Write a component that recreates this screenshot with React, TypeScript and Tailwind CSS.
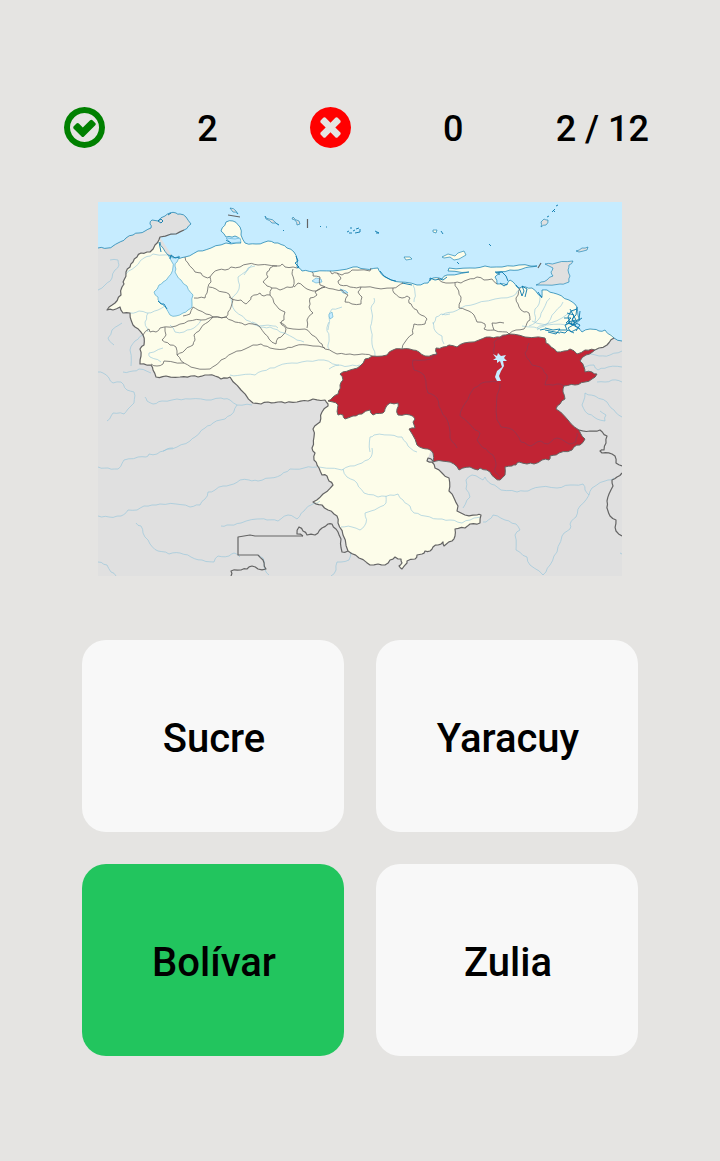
import React, { useState } from "react";

const LAND =
  "M98,248 108,248 113,246 118,243 126,238 133,235 139,233 145,231 151,228 150,224 152,220 158,221 165,216 170,213 176,213 180,214 186,217 191,224 184,230 176,233 160,237 200,300 560,345 614,338 622,341 622,576 98,576Z";

const VENEZUELA =
  "M160,237 155,245 150,252 141,253 137,257 133,262 130,267 126,272 124,280 124,284 122,287 121,295 115,303 107,310 113,310 120,307 123,313 130,313 133,325 135,327 143,335 144,345 140,349 141,356 140,364 151,365 153,370 156,377 166,376 180,377 191,376 198,377 205,375 215,376 221,379 230,377 241,390 253,403 261,404 268,402 278,402 285,403 297,402 308,401 313,399 325,400 328,404 328,406 322,412 320,422 313,429 314,437 312,448 315,453 314,460 319,468 322,475 327,476 329,481 333,485 323,494 313,502 322,505 328,510 337,516 338,523 343,535 348,551 359,558 370,565 378,564 385,565 390,560 395,557 401,559 402,563 399,566 402,569 407,563 407,561 415,559 417,555 422,554 425,551 430,551 433,547 438,545 443,542 444,546 452,541 455,536 455,529 465,528 470,524 480,523 481,515 477,515 465,515 457,511 458,506 454,498 449,491 449,478 442,473 435,468 432,462 427,461 428,458 450,400 560,370 595,350 607,345 614,338 612,335 605,330 599,331 590,329 582,332 575,326 580,320 577,307 569,300 557,294 547,290 542,290 542,297 532,288 522,287 517,287 510,280 507,285 497,284 495,277 500,274 495,272 510,270 522,269 529,267 537,266 519,265 502,267 485,266 470,268 449,268 448,271 469,272 447,275 442,279 433,278 428,283 417,285 400,282 387,278 380,272 378,268 365,269 353,267 333,271 313,272 302,271 297,267 297,260 294,252 287,248 278,243 268,241 256,244 245,243 241,235 240,227 233,221 226,222 221,231 226,237 235,236 240,239 241,243 226,243 211,248 198,251 185,257 176,258 168,255 163,248 160,242Z";

const BOLIVAR =
  "M328,401 333,397 338,394 340,385 343,380 340,374 350,370 360,366 365,359 372,356 387,355 393,350 402,349 413,350 419,352 425,356 437,354 436,348 443,347 449,345 457,347 464,343 479,340 490,337 500,337 509,334 525,337 545,338 546,343 551,347 557,352 564,351 570,349 577,354 585,350 595,350 586,355 580,361 584,367 585,372 592,372 597,374 592,379 585,382 575,385 564,386 563,392 565,399 560,404 556,409 568,420 579,430 585,439 580,445 574,447 572,450 559,453 550,456 549,460 542,460 534,464 527,464 519,462 516,465 512,466 505,467 505,475 500,480 495,478 490,472 480,468 478,470 470,467 459,470 454,464 442,461 433,462 433,453 428,449 422,448 417,445 409,429 415,428 413,422 415,419 410,415 398,415 397,409 398,403 390,403 385,409 383,413 373,415 370,410 362,414 353,416 345,419 343,415 338,415 338,405 333,402Z";

const NATIONAL_BORDERS = [
  "M184,230 176,234 160,237 155,245 150,252 141,253 137,257 133,262 130,267 126,272 124,280 124,284 122,287 121,295 115,303 107,310 113,310 120,307 123,313 130,313 133,325 135,327 143,335 144,345 140,349 141,356 140,364 151,365 153,370 156,377 166,376 180,377 191,376 198,377 205,375 215,376 221,379 230,377",
  "M230,377 241,390 253,403 261,404 268,402 278,402 285,403 297,402 308,401 313,399 325,400 328,404 328,406 322,412 320,422 313,429 314,437 312,448 315,453 314,460 319,468 322,475 327,476 329,481 333,485 323,494 313,502 322,505 328,510 337,516 338,523 343,535 348,551 359,558 370,565 378,564 385,565 390,560 395,557 401,559 402,563 399,566 402,569 407,563 407,561 415,559 417,555 422,554 425,551 430,551 433,547 438,545 443,542 444,546 452,541 455,536 455,529 465,528 470,524 480,523 481,515 477,515 465,515 457,511 458,506 454,498 449,491 449,478 442,473 435,468 432,462 427,461 428,458 433,461",
  "M258,555 263,560 266,569 258,569 252,566 247,569 241,570 231,571 231,576",
  "M303,536 297,534 299,527 303,531 307,535 315,535 322,528 328,524 332,524 338,532 341,539 342,552 348,551",
  "M579,430 590,431 600,430 607,436 606,443 604,450 600,451 602,453 612,454 615,456 616,463 622,466",
  "M622,473 617,477 612,480 613,486 609,494 607,501 608,511 610,516 616,520 616,531 622,536",
  "M595,350 607,345 614,338",
];

const STRAIGHT_BORDERS =
  "M303,536 255,536 250,535 238,537 238,555 258,555 M228,215 240,217 M307.500,219 307.500,228 M538,268 541,263";

const STATE_BORDERS = [
  "M185,257 188,263 192,268 195,272 201,273 205,277 210,277 211,282 208,287 207,293 205,298 194,298",
  "M210,277 213,273 218,270 225,270 231,267 240,267 248,264 258,265 278,266 282,264 285,267 297,268",
  "M209,287 216,289 223,292 229,294 233,300 231,307 228,312 226,317 213,317 206,314 198,310 193,307",
  "M229,297 235,300 241,300 246,304 249,301 251,297 260,293 264,296 270,295 272,288 267,286 263,282 268,277 267,272 270,268 277,266",
  "M226,317 213,317 201,320 188,321 176,326 160,328 156,332 150,332 149,329 143,335",
  "M165,327 166,335 162,340 170,345 176,347 177,355 184,363 164,361 163,364 157,366 151,364",
  "M193,307 190,314 183,316",
  "M177,355 185,350 193,345 195,340 194,335 201,328 208,322 213,317",
  "M226,317 235,322 245,325 253,324 260,327 265,334 269,339 276,344 278,338 283,335 286,329 282,325 280,322",
  "M270,295 274,303 279,309 285,312 284,320 281,323 287,328 305,329 312,335 318,340 322,344 325,349 337,354 350,354 362,354 372,356",
  "M184,363 195,368 210,369 216,365 221,360 233,353 245,349 253,345 261,344 270,348 285,349 295,346 307,345 325,348",
  "M307,328 307,320 313,313 309,307 310,298 317,295 315,292 325,287",
  "M293,269 292,274 294,280 293,287 287,287 280,290 272,288",
  "M294,287 298,283 303,286 307,289 313,291 320,289 325,287 320,285 320,277 313,276 312,272",
  "M325,287 333,289 342,290 348,295 345,302 352,304 361,304 362,297 358,292 361,287",
  "M330,271 332,274 337,273 341,278 338,281 340,285 350,287 360,287 375,288 393,288 398,286 403,283",
  "M337,273 342,275 348,273 352,270 370,271 371,268",
  "M393,288 394,293 402,298 407,296 410,298 409,303 412,306 417,310 421,315 427,319 425,324 414,324 413,334 405,342 402,349",
  "M438,278 442,282 450,283 461,283 467,280 477,277 484,280 492,279 497,284",
  "M455,283 457,288 461,297 459,308 466,310 474,315 477,322 485,324 484,329 494,330 507,332 509,334",
  "M494,330 492,323 504,323",
  "M520,288 516,298 519,307 524,312 529,313 530,320 527,323 524,329 516,330 509,334",
];

const COAST = [
  "M98,248 108,248 113,246 118,243 126,238 133,235 139,233 145,231 151,228 150,224 152,220 158,221 165,216 170,213 176,213 180,214 186,217 191,224 184,230",
  "M160,242 163,248 168,255 176,258 185,257 198,251 211,248 226,243 241,243 240,239 235,236 226,237 221,231 226,222 233,221 240,227 241,235 245,243 256,244 268,241 278,243 287,248 294,252 297,260 297,267 302,271 313,272 333,271 353,267 365,269 378,268 380,272 387,278 400,282 417,285 428,283 433,278 442,279 447,275 469,272 448,271 449,268 470,268 485,266 502,267 519,265 537,266 529,267 522,269 510,270 495,272 500,274 495,277 497,284 507,285 510,280 517,287 522,287 532,288 542,297 542,290 547,290 557,294 569,300 577,307 580,320 575,326 582,332 590,329 599,331 605,330 614,338 622,341",
];

const COAST_DETAIL = [
  "M158,221 161,219 163,221 161,223Z M168,215 171,213 M170,259 171,255 175,258 180,257 M159,242 161,252 M158,301 161,304 164,304 167,309 M226,240 231,243",
  "M296,256 298,261 295,263 299,267 297,268 M380,271 384,276 391,280 396,281 M402,283 412,285 M430,281 430,278 435,280 440,279 443,280 447,277",
  "M496,273 502,272 506,276 508,281 M500,283 504,286 507,284 M516,285 520,290 522,296 524,291 522,286 527,289 525,297 M538,292 542,298",
  "M577,309 571,311 568,317 570,323 565,325 567,330 559,330 M577,307 576,315 572,319 575,324 568,328 571,332 577,329 M580,311 579,319 574,322 580,325 576,331 M567,313 574,315 571,325 582,318 M570,309 576,320 568,322 580,329 M564,318 571,318 566,323 576,325 M560,332 565,333 568,330 574,333",
  "M545,328 553,330 560,329 556,334 548,332 M540,330 545,329 M545,330 560,333",
  "M283,230 284,231 M320,226 321,227 M326,227 327,227",
  "M347,232 349,231 M350,228 352,228 M353,231 355,230 M349,233 352,233 M355,233 360,232 M356,229 359,228 M360,229 360,232",
  "M375,231 379,233 376,233 M441,231 443,234 M489,244 491,246 M457,262 459,264",
  "M556,206 558,205 M552,212 555,209 M553,210 555,212 M547,217 549,216",
];

const ISLANDS_GREY = [
  "M230,208 236,211 238,214 233,212Z",
  "M265,216 269,219 275,222 279,225 272,223 266,219Z",
  "M293,217 299,221 300,224 297,225 295,220 292,219Z",
  "M544,219 548,220 546,225 541,227 541,222Z",
  "M576,251 582,248 588,247 587,250 579,252Z",
  "M545,264 556,263 573,261 569,265 568,270 570,276 569,282 560,284 536,285 541,282 547,280 553,276 551,272 553,268Z",
];

const ISLANDS_CREAM = [
  "M404,257 410,257 412,259 406,260Z",
  "M442,257 448,254 455,256 458,253 464,251 466,255 459,259 454,260 450,257 444,258Z",
  "M433,230 437,230 436,233 433,232Z",
];

const RIVERS = [
  "M110,260 118,260 119,265 115,270 112,278 105,285 98,290",
  "M126,274 135,267 144,258 153,254 172,255",
  "M252,265 245,272 238,277 239,289 231,299 235,311 246,320 258,326 273,326 278,328",
  "M255,266 248,268 244,275",
  "M130,313 139,311 147,313 158,310 165,306",
  "M148,313 145,322 148,332",
  "M170,325 175,332 184,332 194,328 201,320",
  "M163,348 149,353 150,357 161,362",
  "M122,323 119,325 112,330 108,338 114,345",
  "M143,335 135,341 130,350 131,366",
  "M123,372 133,371 139,369 151,373",
  "M98,372 103,373 109,378 113,383 121,382 127,390 134,392 134,403 128,409 124,414 113,413 107,421",
  "M145,397 147,401 153,404 162,401 177,399 190,399 206,400 221,398 230,400 237,405 252,405",
  "M237,405 231,415 225,419 213,423 205,428 195,437 190,441 177,447 163,451",
  "M230,375 241,375 255,375 262,371 270,368 278,366 292,363 307,361 324,360 337,365 349,366 360,365",
  "M329,369 339,365",
  "M252,322 260,327 270,327 280,332 294,338 304,342",
  "M329,322 327,331 329,337 328,345 329,349",
  "M342,307 332,309 329,317 328,330",
  "M374,298 374,303 371,308 372,320 371,330 372,344 375,356",
  "M413,285 415,293 414,302",
  "M433,322 436,332 442,336 444,344",
  "M442,315 453,312 461,308 475,304 495,299 513,296 520,289",
  "M450,314 441,314 436,317 433,324",
  "M540,296 539,304 535,309 535,322",
  "M550,298 543,310 538,320 529,326",
  "M563,302 555,312 548,323 537,330",
  "M577,308 562,318 546,324 537,328",
  "M532,321 547,325 567,325 M522,326 540,329",
  "M370,452 370,437 374,435 390,435 402,437 408,446 417,452",
  "M372,448 371,457 362,463 350,466 342,470 319,467",
  "M343,469 347,477 357,483 364,493 378,497 390,495 398,494 403,500 410,506 414,513 425,516 438,519 450,520 462,523 474,518 480,517",
  "M386,496 386,503 378,508 371,511 365,513 366,523 360,530 352,527 341,527",
  "M98,467 108,468 118,469 124,460 138,457 146,457 149,454 157,454 167,449 173,448",
  "M98,516 109,517 121,516 128,510 137,510 144,506 152,505 160,504 176,504 190,507 200,505 205,499 208,492 215,490 223,486 230,485 240,480 249,480 258,481 270,478 281,475 290,469 304,468 317,467",
  "M136,523 141,526 143,533 150,544 158,551 169,554 180,553 191,557 202,560 214,562 218,556 229,556 234,553 240,557",
  "M221,526 230,525 241,523 257,519 267,520 278,521 288,515 297,519 304,511 311,505 320,501",
  "M98,562 107,565 111,572 116,576",
  "M258,555 263,558 265,570 269,575",
  "M351,552 349,560 337,562 336,570 331,576",
  "M463,508 470,497 466,489 466,480 472,475 483,480 485,477 491,484 501,490 517,492 528,491 540,487 557,488 570,485 583,484 585,490 589,495 580,506 576,517 570,524 570,529 562,536 557,552 550,565 543,575 530,565 527,557 516,550 515,535 520,530 516,524 505,520 493,515 486,522 483,522",
  "M589,495 592,488 605,481 614,478",
  "M622,351 610,355 599,356 585,354",
  "M582,368 594,365 598,370 608,367 622,367",
  "M597,382 605,382 612,380 622,382",
  "M585,393 582,405 588,414 597,419 605,421 606,415 600,411 M585,393 595,396 607,402 614,410 622,417",
  "M620,553 622,554",
];

const BOLIVAR_RIVERS = [
  "M437,354 431,359 413,360 414,370 424,375 428,393 437,398 441,410 448,422 450,438 457,448",
  "M505,335 494,342 494,354",
  "M498,382 485,382 474,388 464,405 460,416 475,430 480,433 477,440 485,449",
  "M500,384 497,395 497,420 501,427 513,430 521,442 531,446 541,441 548,444 557,438 569,444 576,442 577,433",
  "M529,343 525,353 532,365 543,369 547,375 545,385 557,384 564,386",
  "M485,448 493,455 496,463 495,472 500,478",
];

type Point = [number, number];

// Breaks long segments with small bends so borders look surveyed. The bend
// depends only on the two end points, so neighbouring outlines still meet.
function bend([ax, ay]: Point, [bx, by]: Point): Point[] {
  const length = Math.hypot(bx - ax, by - ay);
  if (length < 4 || length > 28) return [];
  const steps = length > 9 ? 3 : 2;
  const forward = ax < bx || (ax === bx && ay < by);
  const [sx, sy, ex, ey] = forward ? [ax, ay, bx, by] : [bx, by, ax, ay];
  const points: Point[] = [];
  for (let i = 1; i < steps; i++) {
    const t = i / steps;
    const noise = Math.sin(sx * 12.9 + sy * 78.2 + ex * 37.7 + i * 5.1) * 0.9;
    points.push([
      sx + (ex - sx) * t - ((ey - sy) / length) * noise,
      sy + (ey - sy) * t + ((ex - sx) / length) * noise,
    ]);
  }
  return forward ? points : points.reverse();
}

function roughen(path: string) {
  return path
    .split("M")
    .filter((part) => part.trim())
    .map((part) => {
      const closed = part.includes("Z");
      const points = part
        .replace("Z", "")
        .trim()
        .split(/\s+/)
        .map((pair) => pair.split(",").map(Number) as Point);
      const result: Point[] = [points[0]];
      for (let i = 1; i < points.length; i++) {
        result.push(...bend(points[i - 1], points[i]), points[i]);
      }
      const body = result.map(([x, y]) => `${x.toFixed(1)},${y.toFixed(1)}`).join(" ");
      return `M${body}${closed ? "Z" : ""}`;
    })
    .join(" ");
}

function VenezuelaMap() {
  return (
    <svg
      viewBox="98 202 524 374"
      className="block h-auto w-full"
      role="img"
      aria-label="Map"
      fill="none"
      strokeLinejoin="round"
    >
      <rect x="98" y="202" width="524" height="374" fill="#c6ecff" />
      <path d={roughen(LAND)} fill="#e0e0e0" />
      <path d={roughen(VENEZUELA)} fill="#fdfdea" />
      <path d={roughen(RIVERS.join(" "))} stroke="#8fc3da" strokeWidth="0.6" />
      <path d={roughen(COAST.join(" "))} stroke="#0978ab" strokeWidth="0.7" />
      <path
        d={roughen(
          "M168,255 173,258 179,256 177,262 175,266 175,272 181,280 187,286 193,295 192,307 188,310 183,313 176,316 170,315 166,308 162,304 158,300 158,297 154,292 159,285 163,282 171,274 173,267 172,262Z",
        )}
        fill="#c6ecff"
        stroke="#3d9dc5"
        strokeWidth="0.6"
      />
      <path
        d="M312,281 316,278 321,279 322,282 316,283Z M329,314 332,312 333,317 330,319 329,316Z M340,289 346,291 348,293 343,293Z M226,238 235,239 240,238 241,242 231,243Z"
        fill="#c6ecff"
        stroke="#55abd0"
        strokeWidth="0.6"
      />
      <path d={roughen(ISLANDS_GREY.join(" "))} fill="#e0e0e0" stroke="#0978ab" strokeWidth="0.6" />
      <path d={ISLANDS_CREAM.join(" ")} fill="#fdfdea" stroke="#0978ab" strokeWidth="0.6" />
      <path d={COAST_DETAIL.join(" ")} stroke="#0978ab" strokeWidth="0.9" />
      <path d={roughen(STATE_BORDERS.join(" "))} stroke="#646464" strokeWidth="0.8" />
      <path d={roughen(BOLIVAR)} fill="#c12434" stroke="#646464" strokeWidth="1" />
      <path d={roughen(BOLIVAR_RIVERS.join(" "))} stroke="#754362" strokeWidth="0.5" />
      <path
        d="M493,354 497,356 498,353 501,356 506,355 504,358 507,361 503,361 504,366 501,371 499,376 501,381 497,381 495,377 497,371 502,367 500,361 497,363 497,360 493,360 496,358Z"
        fill="#c6ecff"
      />
      <path d={roughen(NATIONAL_BORDERS.join(" "))} stroke="#646464" strokeWidth="1.2" />
      <path d={STRAIGHT_BORDERS} stroke="#646464" strokeWidth="1.2" />
    </svg>
  );
}

function CorrectIcon() {
  return (
    <svg viewBox="128 128 1536 1536" className="size-[41px] fill-[#008000]" role="img" aria-label="Correct">
      <path d="M1299 813l-422 422q-19 19-45 19t-45-19l-294-294q-19-19-19-45t19-45l102-102q19-19 45-19t45 19l147 147 275-275q19-19 45-19t45 19l102 102q19 19 19 45t-19 45zm141 83q0-148-73-273t-198-198-273-73-273 73-198 198-73 273 73 273 198 198 273 73 273-73 198-198 73-273zm224 0q0 209-103 385.5t-279.5 279.5-385.5 103-385.5-103-279.5-279.5-103-385.5 103-385.5 279.5-279.5 385.5-103 385.5 103 279.5 279.5 103 385.5z" />
    </svg>
  );
}

function WrongIcon() {
  return (
    <svg viewBox="128 128 1536 1536" className="size-[41px] fill-[#ff0000]" role="img" aria-label="Wrong">
      <path d="M1277 1122q0-26-19-45l-181-181 181-181q19-19 19-45 0-27-19-46l-90-90q-19-19-46-19-26 0-45 19l-181 181-181-181q-19-19-45-19-27 0-46 19l-90 90q-19 19-19 46 0 26 19 45l181 181-181 181q-19 19-19 45 0 27 19 46l90 90q19 19 46 19 26 0 45-19l181-181 181 181q19 19 45 19 27 0 46-19l90-90q19-19 19-46zm387-226q0 209-103 385.5t-279.5 279.5-385.5 103-385.5-103-279.5-279.5-103-385.5 103-385.5 279.5-279.5 385.5-103 385.5 103 279.5 279.5 103 385.5z" />
    </svg>
  );
}

const OPTIONS = ["Sucre", "Yaracuy", "Bolívar", "Zulia"];

export default function App() {
  const [selected, setSelected] = useState("Bolívar");

  return (
    <main className="min-h-screen bg-[#e5e4e2] pt-[103px] pb-[105px] font-['Roboto',sans-serif] font-medium text-black">
      <header className="flex h-12 items-center justify-between pr-[71px] pl-16 text-4xl">
        <CorrectIcon />
        <span className="pt-1">2</span>
        <WrongIcon />
        <span className="pt-1">0</span>
        <span className="pt-1">2 / 12</span>
      </header>
      <div className="mt-[51px] px-[98px]">
        <VenezuelaMap />
      </div>
      <div className="mt-16 grid grid-cols-2 gap-8 px-[82px]">
        {OPTIONS.map((name) => (
          <button
            key={name}
            type="button"
            onClick={() => setSelected(name)}
            className={
              name === selected
                ? "h-48 rounded-3xl bg-[#22c55e] pt-1.5 pl-0.5 text-[40px]"
                : "h-48 rounded-3xl bg-[#f8f8f8] pt-1.5 pl-0.5 text-[40px]"
            }
          >
            {name}
          </button>
        ))}
      </div>
    </main>
  );
}
